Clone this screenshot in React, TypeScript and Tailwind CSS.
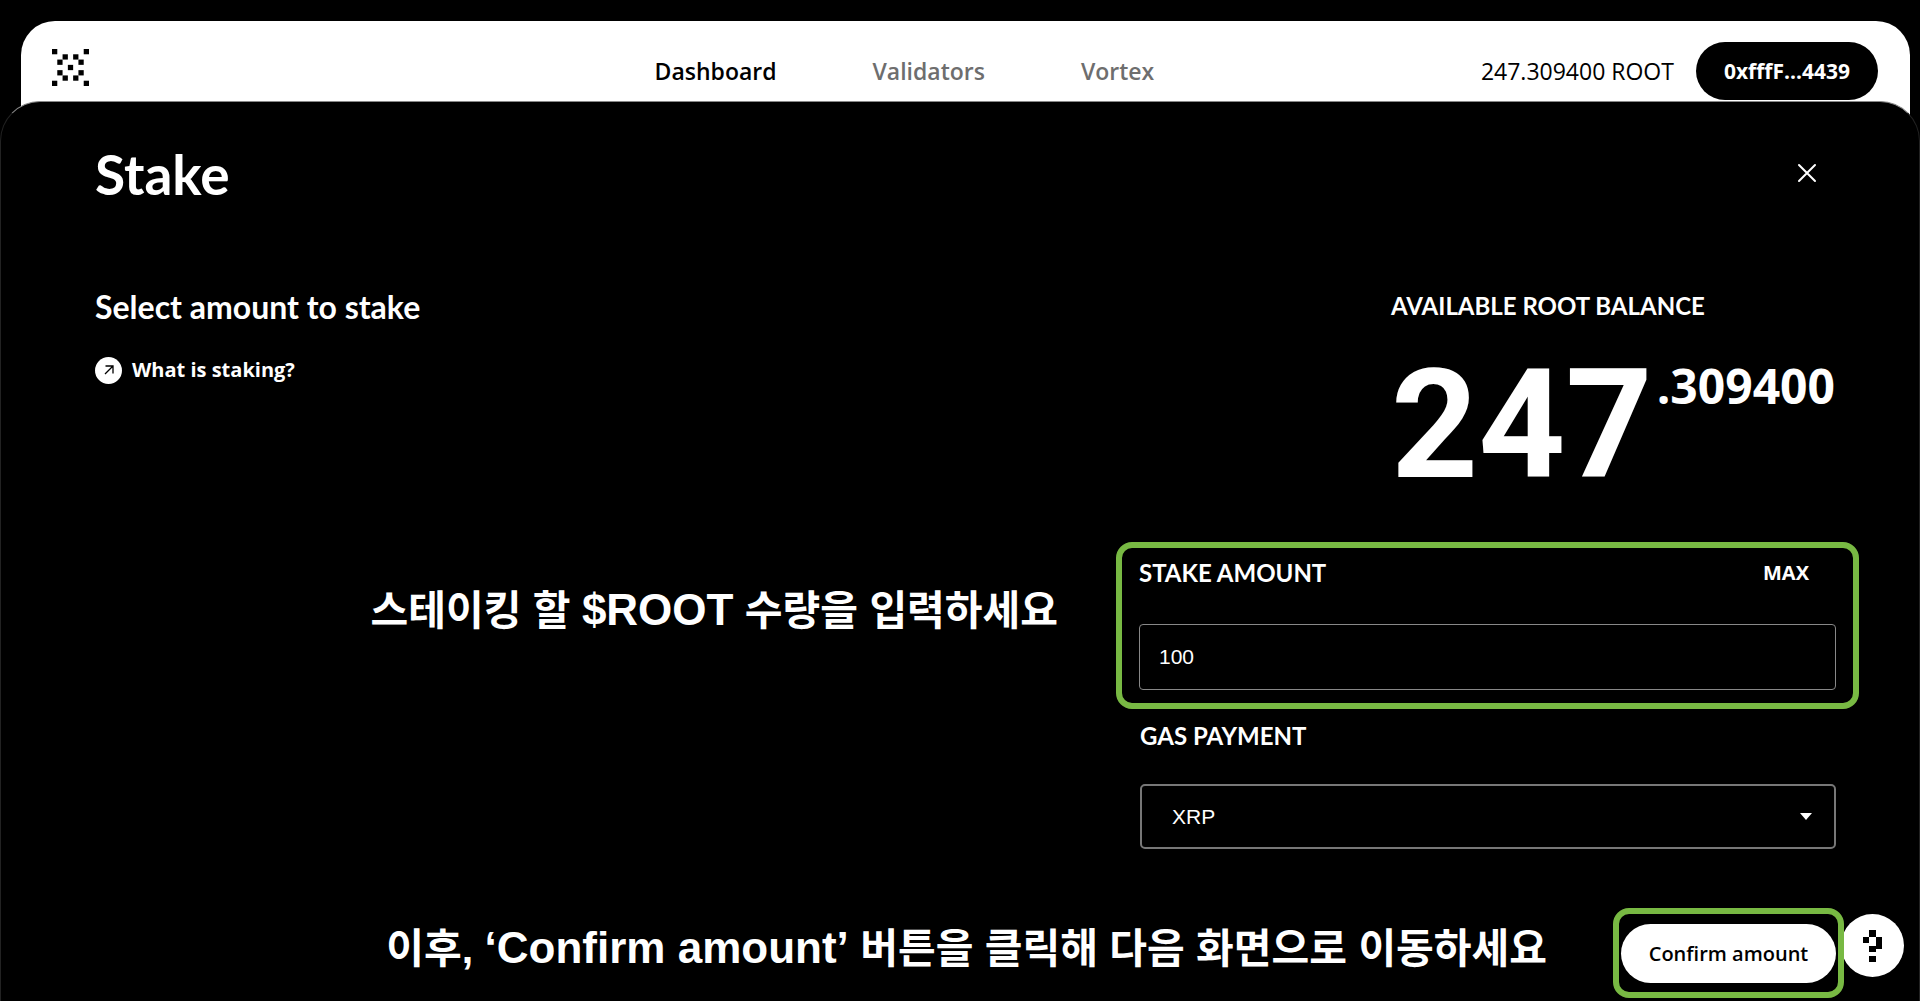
import React, { useState } from "react";

const navItems = [
  { label: "Dashboard", active: true },
  { label: "Validators", active: false },
  { label: "Vortex", active: false },
];

const logoPixels = [
  [0, 0], [6, 0], [2, 1], [4, 1], [1, 2], [5, 2], [3, 3],
  [1, 4], [5, 4], [2, 5], [4, 5], [0, 6], [6, 6],
];

function Logo() {
  return (
    <svg viewBox="0 0 7 7" className="w-[37px] h-[37px]" aria-hidden="true">
      {logoPixels.map(([x, y]) => (
        <rect key={`${x}-${y}`} x={x} y={y} width="1" height="1" />
      ))}
    </svg>
  );
}

function Header() {
  return (
    <header className="ml-[21px] mr-2.5 pl-[31px] pr-8 pt-[21px] pb-6 bg-white text-black rounded-t-[34px] grid grid-cols-[33%_1fr_auto] items-center text-[23px] leading-7">
      <a href="#" aria-label="Home" className="self-start justify-self-start mt-[7px]">
        <Logo />
      </a>
      <nav className="flex gap-24 font-semibold">
        {navItems.map((item) => (
          <a key={item.label} href="#" className={item.active ? "text-black" : "text-[#6e6e6e]"}>
            {item.label}
          </a>
        ))}
      </nav>
      <div className="flex items-center gap-[22px]">
        <span>247.309400 ROOT</span>
        <button className="h-[58px] px-7 rounded-full bg-black text-white text-[21px] font-bold">
          0xfffF...4439
        </button>
      </div>
    </header>
  );
}

function Balance() {
  return (
    <div className="mr-6 mt-[5px] font-bold">
      <h3 className="font-['Lato',sans-serif] text-2xl leading-7">AVAILABLE ROOT BALANCE</h3>
      <div className="flex items-start gap-1 mt-[30px]">
        <span className="font-['Roboto',sans-serif] text-[152px] leading-[150px]">247</span>
        <span className="text-5xl leading-[48px] mt-3">.309400</span>
      </div>
    </div>
  );
}

function HelpButton() {
  return (
    <button
      aria-label="Help"
      className="fixed right-4 bottom-6 w-[63px] h-[63px] rounded-full bg-white text-black flex items-center justify-center"
    >
      <svg viewBox="0 0 3 5" className="w-[19px] h-8" fill="currentColor" shapeRendering="crispEdges" aria-hidden="true">
        <rect x="1" y="0" width="1" height="1" />
        <rect x="0" y="1" width="1" height="1" />
        <rect x="2" y="1" width="1" height="2" />
        <rect x="1" y="2.5" width="1" height="1" />
        <rect x="1" y="4" width="1" height="1" />
      </svg>
    </button>
  );
}

const captionClass =
  "font-['Liberation_Sans','Noto_Sans_CJK_KR',sans-serif] font-bold text-[41px] leading-[56px] text-right whitespace-nowrap";

export default function App() {
  const [amount, setAmount] = useState("100");
  const [gas, setGas] = useState("XRP");

  return (
    <div className="min-h-screen bg-black text-white pt-[21px] font-['Open_Sans',sans-serif]">
      <Header />

      <main className="relative -mt-[23px] pl-[94px] pr-[60px] pt-[42px] pb-[3px] bg-black border border-b-0 border-[#222] border-t-[#888] rounded-t-[40px]">
        <div className="flex items-center justify-between">
          <h1 className="font-['Lato',sans-serif] text-[55px] leading-[60px] font-bold">Stake</h1>
          <button aria-label="Close" className="mr-10">
            <svg viewBox="0 0 24 24" className="w-6 h-6" fill="none" stroke="currentColor" strokeWidth="2" strokeLinecap="round" aria-hidden="true">
              <path d="M4 3 L20 19 M20 3 L4 19" />
            </svg>
          </button>
        </div>

        <section className="flex justify-between mt-[83px]">
          <div>
            <h2 className="font-['Lato',sans-serif] text-[32px] leading-10 font-bold">Select amount to stake</h2>
            <a href="#" className="inline-flex items-center gap-2.5 mt-[29px] text-xl leading-7 font-bold">
              <span className="w-[27px] h-[27px] rounded-full bg-white text-black flex items-center justify-center">
                <svg viewBox="0 0 10 10" className="w-2.5 h-2.5" fill="none" stroke="currentColor" strokeWidth="1.3" aria-hidden="true">
                  <path d="M1 9 L9 1 M1.5 1 H9 V8.5" />
                </svg>
              </span>
              What is staking?
            </a>
          </div>
          <Balance />
        </section>

        <section className="flex justify-end gap-[58px] mt-[42px]">
          <p className={`${captionClass} mt-10`}>
            스테이킹 할 <span className="text-[44px]">$ROOT</span> 수량을 입력하세요
          </p>
          <div className="w-[743px] border-6 border-[#78b943] rounded-2xl pl-[17px] pr-[17px] pt-[11px] pb-[13px]">
            <div className="flex items-center justify-between font-bold">
              <label htmlFor="amount" className="font-['Lato',sans-serif] text-2xl leading-7">STAKE AMOUNT</label>
              <button className="text-xl leading-7 mr-[27px]" onClick={() => setAmount("247.309400")}>
                MAX
              </button>
            </div>
            <input
              id="amount"
              type="text"
              value={amount}
              onChange={(e) => setAmount(e.target.value)}
              className="block w-full h-[66px] mt-[37px] px-[19px] bg-black border border-[#888] rounded-[4px] text-[21px] font-light font-['Liberation_Sans',sans-serif]"
            />
          </div>
        </section>

        <section className="w-[696px] ml-auto mr-[23px] mt-[13px]">
          <label htmlFor="gas" className="block font-['Lato',sans-serif] text-2xl leading-7 font-bold">GAS PAYMENT</label>
          <div className="relative mt-[34px]">
            <select
              id="gas"
              value={gas}
              onChange={(e) => setGas(e.target.value)}
              className="block w-full h-[65px] pl-[30px] bg-black border-2 border-[#777] rounded-[5px] appearance-none text-[21px] font-['Liberation_Sans',sans-serif]"
            >
              <option>XRP</option>
              <option>ROOT</option>
            </select>
            <svg viewBox="0 0 12 7" className="absolute right-6 top-[29px] w-3 h-[7px] pointer-events-none" fill="currentColor" aria-hidden="true">
              <path d="M0 0 H12 L6 7 Z" />
            </svg>
          </div>
        </section>

        <section className="flex justify-end gap-[66px] mt-[59px] mr-[15px]">
          <p className={`${captionClass} mt-3`}>
            이후, <span className="text-[44px]">‘Confirm amount’</span> 버튼을 클릭해 다음 화면으로 이동하세요
          </p>
          <div className="relative z-10 border-6 border-[#78b943] rounded-2xl px-0.5 pt-2.5 pb-[9px]">
            <button className="h-[59px] w-[215px] rounded-full bg-white text-black text-xl font-semibold">
              Confirm amount
            </button>
          </div>
        </section>

        <HelpButton />
      </main>
    </div>
  );
}
